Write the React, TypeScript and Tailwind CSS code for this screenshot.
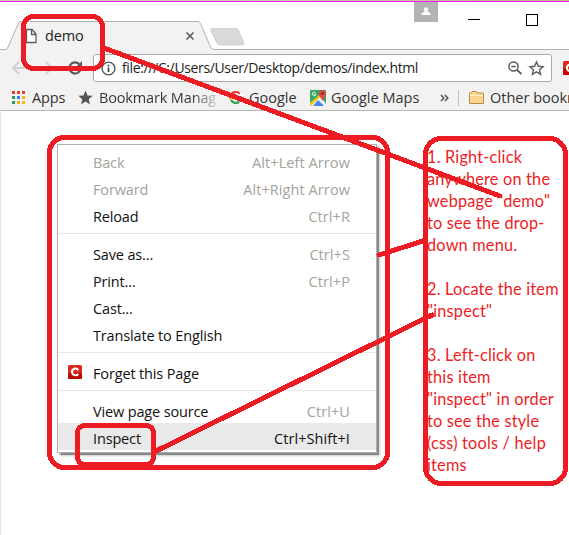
import React from "react";

const RED = "#ed1c24";

type Item = { label: string; keys?: string; off?: boolean; icon?: boolean; active?: boolean };

const groups: Item[][] = [
  [
    { label: "Back", keys: "Alt+Left Arrow", off: true },
    { label: "Forward", keys: "Alt+Right Arrow", off: true },
    { label: "Reload", keys: "Ctrl+R" },
  ],
  [
    { label: "Save as...", keys: "Ctrl+S" },
    { label: "Print...", keys: "Ctrl+P" },
    { label: "Cast..." },
    { label: "Translate to English" },
  ],
  [{ label: "Forget this Page", icon: true }],
  [
    { label: "View page source", keys: "Ctrl+U" },
    { label: "Inspect", keys: "Ctrl+Shift+I", active: true },
  ],
];

const notes = [
  "1. Right-click",
  "anywhere on the",
  "webpage \"demo\"",
  "to see the drop-",
  "down menu.",
  "",
  "2. Locate the item",
  "\"inspect\"",
  "",
  "3. Left-click on",
  "this item",
  "\"inspect\" in order",
  "to see the style",
  "(css) tools / help",
  "items",
];

function Comodo() {
  return (
    <svg width="14" height="14" viewBox="0 0 14 14" className="block shrink-0">
      <rect width="14" height="14" rx="1.5" fill="#d92a20" />
      <path d="M0 8h14v4.500a1.500 1.500 0 0 1-1.500 1.500h-11A1.500 1.500 0 0 1 0 12.500z" fill="#bd0a05" />
      <path d="M10.300 5.200C9.400 3.700 7.800 3.400 6.400 3.700 4.600 4.200 3.800 5.800 4 7.400c.3 2.800 4.300 3.900 6.300 1.600" fill="none" stroke="#fff" strokeWidth="2" />
    </svg>
  );
}

function TabStrip() {
  return (
    <div className="relative h-[48px] bg-white">
      <svg width="569" height="48" className="absolute left-0 top-0">
        <path d="M0 47.500H5Q7 47.500 8 45L18.500 21Q19.500 19.500 21 19.500H198Q199.500 19.500 200.500 21.500L210.500 45Q212 47.500 214 47.500H569V48H0Z" fill="#f2f2f2" />
        <path d="M0 47.500H5Q7 47.500 8 45L18.500 21Q19.500 19.500 21 19.500H198Q199.500 19.500 200.500 21.500L210.500 45Q212 47.500 214 47.500H569" fill="none" stroke="#b0b0b0" />
        <path d="M212 26.500h24.500q1.500 0 2.200 2l5 12q.8 2.500-1 2.500H220q-2 0-3-2l-6-12q-1-2.500 1-2.500z" fill="#d9d9d9" stroke="#c5c5c5" strokeWidth=".7" />
        <path d="M26.500 27.500h5.500l4 4.500v8.500h-9.500zM31.500 27.500v5h4.500" fill="#fff" stroke="#5c5c5c" strokeWidth="1.300" />
        <path d="M186.500 30.500l7 7m0-7l-7 7" stroke="#5a5a5a" strokeWidth="1.600" />
        <rect x="414" y="0" width="24" height="20" fill="#b3b3b3" />
        <circle cx="426" cy="7.500" r="2.200" fill="#fff" />
        <path d="M421.500 13v-1.200q1-2.300 4.500-2.300t4.500 2.300V13z" fill="#fff" />
        <path d="M468 17.500h12" stroke="#000" />
        <rect x="526.500" y="12.500" width="11" height="11" fill="none" stroke="#000" />
      </svg>
      <span className="absolute left-[45px] top-[23px] text-[14.500px] leading-[22px] tracking-[-0.15px] text-[#222]">demo</span>
    </div>
  );
}

function AddressBar() {
  return (
    <div className="flex h-[35px] items-start pt-1">
      <svg width="93" height="28" className="shrink-0" fill="none">
        <path d="M25 14H13m6-6l-6 6 6 6" stroke="#d0d0d0" strokeWidth="2" />
        <path d="M40 14h12m-6-6l6 6-6 6" stroke="#d0d0d0" strokeWidth="2" />
        <path d="M79.200 10.200A5.600 5.600 0 1 0 80.500 15" stroke="#5a5a5a" strokeWidth="2.200" />
        <path d="M82 7v6.500h-6.500z" fill="#5a5a5a" />
      </svg>
      <div className="flex h-[28px] w-[459px] shrink-0 items-center rounded-[3px] border border-[#a9a9a9] bg-white pl-[7px]">
        <svg width="15" height="15" viewBox="0 0 15 15" fill="none" className="shrink-0">
          <circle cx="7.500" cy="7.500" r="6.400" stroke="#555" strokeWidth="1.400" />
          <path d="M7.500 6.500v4.500M7.500 3.700v1.700" stroke="#444" strokeWidth="1.700" />
        </svg>
        <span className="ml-[6px] w-[386px] shrink-0 whitespace-pre text-[14px] leading-[22px] tracking-[-0.36px] text-[#222]">file:///C:/Users/User/Desktop/demos/index.html</span>
        <svg width="38" height="20" fill="none" className="shrink-0">
          <circle cx="5.500" cy="8.500" r="4.600" stroke="#5a5a5a" strokeWidth="1.500" />
          <path d="M9 12l4.500 4M3.300 8.500h4.500" stroke="#5a5a5a" strokeWidth="1.700" />
          <path d="M28.500 4l1.900 4.300 4.700.4-3.600 3.100 1.100 4.600-4.100-2.500-4.100 2.500 1.100-4.600-3.600-3.100 4.700-.4z" stroke="#5a5a5a" strokeWidth="1.400" />
        </svg>
      </div>
      <div className="ml-[11px] mt-[7px]"><Comodo /></div>
    </div>
  );
}

function Bookmarks() {
  const dots = ["#ea3a2f", "#ea3a2f", "#ea3a2f", "#24a15b", "#2a83f0", "#f9b616", "#24a15b", "#f9b616", "#f9b616"];
  return (
    <div className="flex h-[25px] w-full items-center overflow-hidden whitespace-pre text-[14.500px] leading-[24px] text-[#333]">
      <div className="ml-[12px] grid shrink-0 grid-cols-3 gap-[2px]">
        {dots.map((c, i) => <i key={i} className="block size-[3px]" style={{ background: c }} />)}
      </div>
      <span className="ml-[7px] w-[46px] shrink-0 tracking-[-0.1px]">Apps</span>
      <svg width="15" height="15" viewBox="0 0 15 15" className="shrink-0"><path d="M7.500.5l2 4.900 5.200.4-4 3.400 1.300 5.200-4.500-2.800L3 14.400l1.300-5.200-4-3.400 5.200-.4z" fill="#555" /></svg>
      <span className="ml-[6px] w-[117px] shrink-0 overflow-hidden bg-linear-to-r from-[#333] from-80% to-[#3333] bg-clip-text tracking-[-0.15px] text-transparent">Bookmark Manag</span>
      <svg width="15" height="15" viewBox="-1 -1 15 15" fill="none" className="ml-[12px] shrink-0" strokeWidth="2.400">
        <circle cx="6.500" cy="6.500" r="7.500" fill="#fff" />
        <path d="M10.700 2.800A5.300 5.300 0 0 0 2 3.700" stroke="#ea4335" />
        <path d="M2 3.700a5.300 5.300 0 0 0 0 5.500" stroke="#fbbc05" />
        <path d="M2 9.200a5.300 5.300 0 0 0 8 1.500" stroke="#34a853" />
        <path d="M10 10.700a5.300 5.300 0 0 0 1.700-4.200H6.500" stroke="#4285f4" />
      </svg>
      <span className="ml-[6px] w-[61px] shrink-0">Google</span>
      <svg width="16" height="16" viewBox="0 0 16 16" className="shrink-0">
        <rect width="16" height="16" rx="1" fill="#36a665" />
        <path d="M0 15L10 5l6 9v2H1z" fill="#f1f1f1" />
        <path d="M3 16l5-6 6 6z" fill="#4285f4" />
        <path d="M0 13l9-8 1.500 1.500L1 16H0z" fill="#fbc51b" />
        <path d="M12.300 0A3.600 3.600 0 0 1 16 3.700c0 2.500-2.500 4-3.600 7.500C11.500 7.700 8.800 6.200 8.800 3.700A3.600 3.600 0 0 1 12.300 0z" fill="#dc4a3d" />
        <circle cx="12.400" cy="3.500" r="1.300" fill="#8b251e" />
        <path d="M5.500 2.800a1.800 1.800 0 1 0 .4 1.500H4.300" fill="none" stroke="#fff" />
      </svg>
      <span className="ml-[5px] w-[109px] shrink-0">Google Maps</span>
      <svg width="9" height="8" className="shrink-0"><path d="M1 1l2.800 3L1 7m4-6l2.800 3L5 7" fill="none" stroke="#555" strokeWidth="1.500" /></svg>
      <i className="ml-[9px] h-4 w-px shrink-0 bg-[#c4c4c4]" />
      <svg width="15" height="13" viewBox="0 0 15 13" className="ml-[10px] shrink-0">
        <path d="M.5 12.500v-10q0-1 1-1h1l.7-1h4l1 1.500h5.300q1 0 1 1v9.500z" fill="#fbd58d" stroke="#b98b46" />
        <path d="M1.200 4.500h12.600" stroke="#fff0c9" />
      </svg>
      <span className="ml-[6px] shrink-0">Other bookmarks</span>
    </div>
  );
}

function ContextMenu() {
  return (
    <div className="ml-[57px] mt-[33px] h-[309px] w-[320px] shrink-0 border border-[#b0b0b0] bg-white py-[2px] text-[14.500px] shadow-[1.5px_1.5px_1px_#888,3px_3px_2px_#ccc]">
      {groups.map((g, gi) => (
        <React.Fragment key={gi}>
          {gi > 0 && <div className="my-[5px] h-px bg-[#e7e7e7]" />}
          {g.map((it) => (
            <div key={it.label} className={`flex h-[27px] items-center pr-[26px] leading-[27px] ${it.active ? "bg-[#e9e9e9]" : ""} ${it.off ? "text-[#a3a39b]" : "text-[#111]"}`}>
              <span className="flex w-[35px] shrink-0 pl-[10px]">{it.icon && <Comodo />}</span>
              <span className="relative top-[2px] tracking-[-0.15px]">{it.label}</span>
              <span className={`relative top-[2px] ml-auto tracking-[0.08px] ${it.active ? "text-[#111]" : "text-[#a3a39b]"}`}>{it.keys}</span>
            </div>
          ))}
        </React.Fragment>
      ))}
    </div>
  );
}

function Annotations() {
  return (
    <svg width="569" height="535" className="pointer-events-none absolute left-0 top-0" fill="none" stroke={RED} strokeWidth="5" strokeLinecap="round" shapeRendering="crispEdges">
      <rect x="23.500" y="16.500" width="79" height="52" rx="10" />
      <rect x="49.500" y="137.500" width="338" height="330" rx="15" />
      <rect x="425.500" y="138.500" width="140" height="345" rx="16" />
      <rect x="77.500" y="425.500" width="76" height="39" rx="7" />
      <path d="M104 48L500 196M379 255l47-15M156 451l276-136" />
    </svg>
  );
}

export default function App() {
  return (
    <div className="relative h-[535px] w-[569px] overflow-hidden bg-white font-['Open_Sans','Noto_Sans',sans-serif]">
      <div className="h-[2px] border-b border-[#f21de8] bg-linear-to-r from-[#c9c9b1] via-[#c3ccb0] to-[#c4ae8d]" />
      <TabStrip />
      <div className="h-[61px] border-b border-[#b6b6b6] bg-[#f2f2f2]">
        <AddressBar />
        <Bookmarks />
      </div>
      <main className="flex h-[424px] items-start border-l border-[#e4e4e4]">
        <div className="-ml-px"><ContextMenu /></div>
        <div className="ml-[50px] mt-[35px] whitespace-pre font-['Lato',sans-serif] text-[16.300px] leading-[22px] tracking-[0.2px] text-[#ed1c24]">
          {notes.map((n, i) => <div key={i} className="h-[22px]">{n}</div>)}
        </div>
      </main>
      <Annotations />
    </div>
  );
}
